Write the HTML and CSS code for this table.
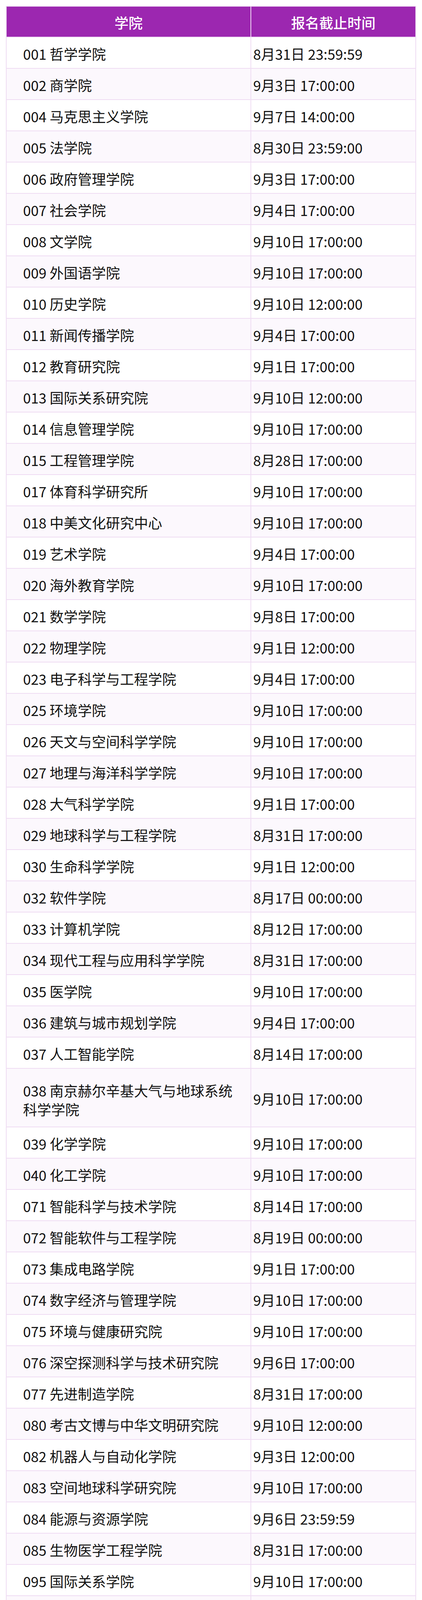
FILE: index.html
```html
<!DOCTYPE html>
<html lang="zh-CN">
<head>
<meta charset="utf-8">
<title>报名截止时间</title>
<link rel="stylesheet" href="styles.css">
</head>
<body>
<table class="deadline-table">
  <thead>
    <tr class="head-row"><th class="col-school">学院</th><th class="col-time">报名截止时间</th></tr>
  </thead>
  <tbody>
    <tr><td class="school">001 哲学学院</td><td class="time">8月31日 23:59:59</td></tr>
    <tr><td class="school">002 商学院</td><td class="time">9月3日 17:00:00</td></tr>
    <tr><td class="school">004 马克思主义学院</td><td class="time">9月7日 14:00:00</td></tr>
    <tr><td class="school">005 法学院</td><td class="time">8月30日 23:59:00</td></tr>
    <tr><td class="school">006 政府管理学院</td><td class="time">9月3日 17:00:00</td></tr>
    <tr><td class="school">007 社会学院</td><td class="time">9月4日 17:00:00</td></tr>
    <tr><td class="school">008 文学院</td><td class="time">9月10日 17:00:00</td></tr>
    <tr><td class="school">009 外国语学院</td><td class="time">9月10日 17:00:00</td></tr>
    <tr><td class="school">010 历史学院</td><td class="time">9月10日 12:00:00</td></tr>
    <tr><td class="school">011 新闻传播学院</td><td class="time">9月4日 17:00:00</td></tr>
    <tr><td class="school">012 教育研究院</td><td class="time">9月1日 17:00:00</td></tr>
    <tr><td class="school">013 国际关系研究院</td><td class="time">9月10日 12:00:00</td></tr>
    <tr><td class="school">014 信息管理学院</td><td class="time">9月10日 17:00:00</td></tr>
    <tr><td class="school">015 工程管理学院</td><td class="time">8月28日 17:00:00</td></tr>
    <tr><td class="school">017 体育科学研究所</td><td class="time">9月10日 17:00:00</td></tr>
    <tr><td class="school">018 中美文化研究中心</td><td class="time">9月10日 17:00:00</td></tr>
    <tr><td class="school">019 艺术学院</td><td class="time">9月4日 17:00:00</td></tr>
    <tr><td class="school">020 海外教育学院</td><td class="time">9月10日 17:00:00</td></tr>
    <tr><td class="school">021 数学学院</td><td class="time">9月8日 17:00:00</td></tr>
    <tr><td class="school">022 物理学院</td><td class="time">9月1日 12:00:00</td></tr>
    <tr><td class="school">023 电子科学与工程学院</td><td class="time">9月4日 17:00:00</td></tr>
    <tr><td class="school">025 环境学院</td><td class="time">9月10日 17:00:00</td></tr>
    <tr><td class="school">026 天文与空间科学学院</td><td class="time">9月10日 17:00:00</td></tr>
    <tr><td class="school">027 地理与海洋科学学院</td><td class="time">9月10日 17:00:00</td></tr>
    <tr><td class="school">028 大气科学学院</td><td class="time">9月1日 17:00:00</td></tr>
    <tr><td class="school">029 地球科学与工程学院</td><td class="time">8月31日 17:00:00</td></tr>
    <tr><td class="school">030 生命科学学院</td><td class="time">9月1日 12:00:00</td></tr>
    <tr><td class="school">032 软件学院</td><td class="time">8月17日 00:00:00</td></tr>
    <tr><td class="school">033 计算机学院</td><td class="time">8月12日 17:00:00</td></tr>
    <tr><td class="school">034 现代工程与应用科学学院</td><td class="time">8月31日 17:00:00</td></tr>
    <tr><td class="school">035 医学院</td><td class="time">9月10日 17:00:00</td></tr>
    <tr><td class="school">036 建筑与城市规划学院</td><td class="time">9月4日 17:00:00</td></tr>
    <tr><td class="school">037 人工智能学院</td><td class="time">8月14日 17:00:00</td></tr>
    <tr class="tall"><td class="school">038 南京赫尔辛基大气与地球系统<br>科学学院</td><td class="time">9月10日 17:00:00</td></tr>
    <tr><td class="school">039 化学学院</td><td class="time">9月10日 17:00:00</td></tr>
    <tr><td class="school">040 化工学院</td><td class="time">9月10日 17:00:00</td></tr>
    <tr><td class="school">071 智能科学与技术学院</td><td class="time">8月14日 17:00:00</td></tr>
    <tr><td class="school">072 智能软件与工程学院</td><td class="time">8月19日 00:00:00</td></tr>
    <tr><td class="school">073 集成电路学院</td><td class="time">9月1日 17:00:00</td></tr>
    <tr><td class="school">074 数字经济与管理学院</td><td class="time">9月10日 17:00:00</td></tr>
    <tr><td class="school">075 环境与健康研究院</td><td class="time">9月10日 17:00:00</td></tr>
    <tr><td class="school">076 深空探测科学与技术研究院</td><td class="time">9月6日 17:00:00</td></tr>
    <tr><td class="school">077 先进制造学院</td><td class="time">8月31日 17:00:00</td></tr>
    <tr><td class="school">080 考古文博与中华文明研究院</td><td class="time">9月10日 12:00:00</td></tr>
    <tr><td class="school">082 机器人与自动化学院</td><td class="time">9月3日 12:00:00</td></tr>
    <tr><td class="school">083 空间地球科学研究院</td><td class="time">9月10日 17:00:00</td></tr>
    <tr><td class="school">084 能源与资源学院</td><td class="time">9月6日 23:59:59</td></tr>
    <tr><td class="school">085 生物医学工程学院</td><td class="time">8月31日 17:00:00</td></tr>
    <tr><td class="school">095 国际关系学院</td><td class="time">9月10日 17:00:00</td></tr>
    <tr><td class="school">096 现代生物研究院</td><td class="time">8月31日 16:00:00</td></tr>
    <tr class="tall"><td class="school">097 人工微结构科学与技术协同<br>创新中心</td><td class="time">9月10日 17:00:00</td></tr>
    <tr><td class="school">098 匡亚明学院</td><td class="time">9月10日 17:00:00</td></tr>
  </tbody>
</table>
</body>
</html>
```
FILE: styles.css
```css
html, body {
  margin: 0;
  padding: 0;
  background: #ffffff;
}

body {
  padding: 15px;
  font-family: "Noto Sans CJK SC", "Noto Sans", sans-serif;
  font-size: 36px;
  color: #111111;
}

.deadline-table {
  width: 1050px;
  table-layout: fixed;
  border-collapse: separate;
  border-spacing: 0;
  border-top: 2px solid #efdcf3;
  border-left: 2px solid #efdcf3;
}

.deadline-table th,
.deadline-table td {
  border-right: 2px solid #efdcf3;
  border-bottom: 2px solid #efdcf3;
  line-height: 44px;
  padding-top: 3px;
  padding-bottom: 0;
  vertical-align: middle;
  box-sizing: border-box;
}

.deadline-table tr {
  height: 80px;
}

.deadline-table tr.head-row {
  height: 79px;
}

.deadline-table tr.tall {
  height: 150px;
}

.deadline-table tr.tall td.school {
  line-height: 48px;
  padding-top: 10px;
}

.deadline-table th {
  background: #9c27b0;
  color: #ffffff;
  font-weight: 500;
  text-align: center;
  padding-left: 0;
  padding-right: 0;
}

.col-school {
  width: 626px;
}

.deadline-table td.school {
  padding-left: 42px;
  padding-right: 6px;
}

.deadline-table td.time {
  padding-left: 5px;
  padding-right: 4px;
}

.deadline-table tbody tr:nth-child(even) td {
  background: #fcf8fd;
}
```
